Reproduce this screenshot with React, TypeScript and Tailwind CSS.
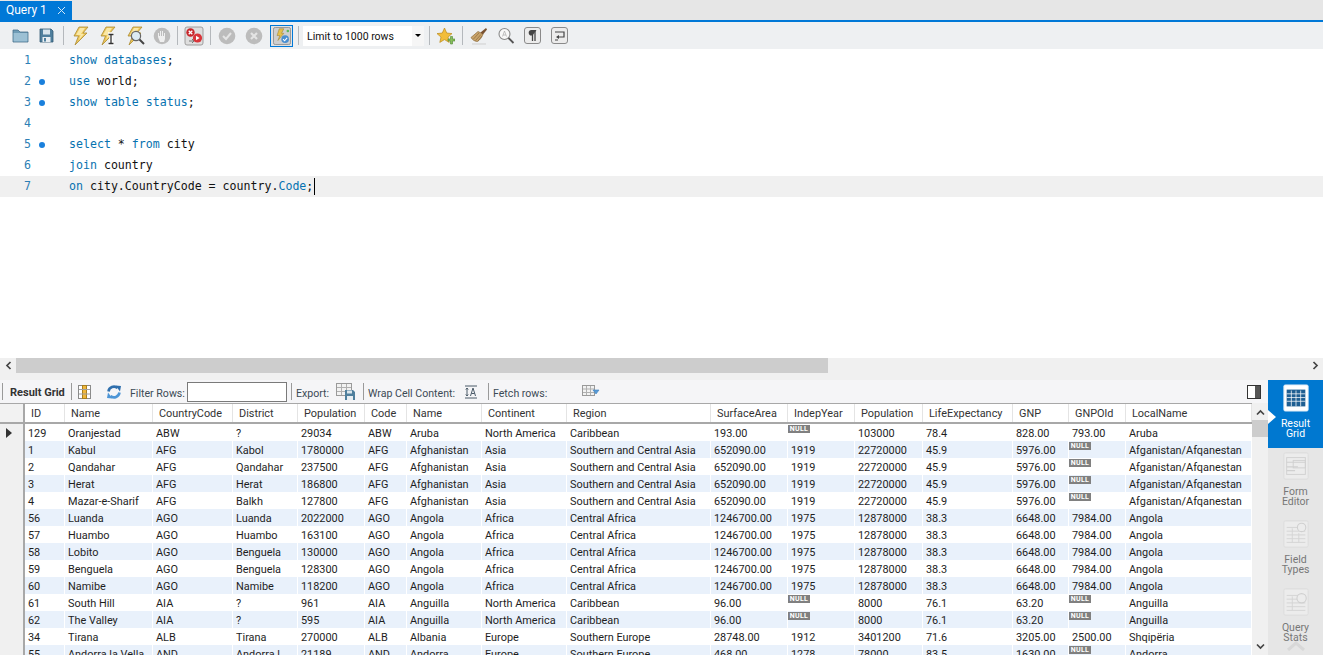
import { ReactNode } from 'react';

const ui = "font-['Roboto',sans-serif]";

const rowGrid =
  'grid grid-cols-[25px_40px_88px_80px_65px_67px_42px_75px_85px_144px_77px_67px_68px_90px_56px_57px_126px]';

type Row = (string | null)[];

const caribbean = ['ABW', 'Aruba', 'North America', 'Caribbean'];
const afg = ['AFG', 'Afghanistan', 'Asia', 'Southern and Central Asia', '652090.00', '1919', '22720000', '45.9', '5976.00', null, 'Afganistan/Afqanestan'];
const ago = ['AGO', 'Angola', 'Africa', 'Central Africa', '1246700.00', '1975', '12878000', '38.3', '6648.00', '7984.00', 'Angola'];
const aia = ['AIA', 'Anguilla', 'North America', 'Caribbean', '96.00', null, '8000', '76.1', '63.20', null, 'Anguilla'];

const rows: Row[] = [
  ['129', 'Oranjestad', 'ABW', '?', '29034', ...caribbean, '193.00', null, '103000', '78.4', '828.00', '793.00', 'Aruba'],
  ['1', 'Kabul', 'AFG', 'Kabol', '1780000', ...afg],
  ['2', 'Qandahar', 'AFG', 'Qandahar', '237500', ...afg],
  ['3', 'Herat', 'AFG', 'Herat', '186800', ...afg],
  ['4', 'Mazar-e-Sharif', 'AFG', 'Balkh', '127800', ...afg],
  ['56', 'Luanda', 'AGO', 'Luanda', '2022000', ...ago],
  ['57', 'Huambo', 'AGO', 'Huambo', '163100', ...ago],
  ['58', 'Lobito', 'AGO', 'Benguela', '130000', ...ago],
  ['59', 'Benguela', 'AGO', 'Benguela', '128300', ...ago],
  ['60', 'Namibe', 'AGO', 'Namibe', '118200', ...ago],
  ['61', 'South Hill', 'AIA', '?', '961', ...aia],
  ['62', 'The Valley', 'AIA', '?', '595', ...aia],
  ['34', 'Tirana', 'ALB', 'Tirana', '270000', 'ALB', 'Albania', 'Europe', 'Southern Europe', '28748.00', '1912', '3401200', '71.6', '3205.00', '2500.00', 'Shqipëria'],
  ['55', 'Andorra la Vella', 'AND', 'Andorra l', '21189', 'AND', 'Andorra', 'Europe', 'Southern Europe', '468.00', '1278', '78000', '83.5', '1630.00', null, 'Andorra'],
];

const headers = ['ID', 'Name', 'CountryCode', 'District', 'Population', 'Code', 'Name', 'Continent', 'Region', 'SurfaceArea', 'IndepYear', 'Population', 'LifeExpectancy', 'GNP', 'GNPOld', 'LocalName'];

function Kw({ children }: { children: ReactNode }) {
  return <span className="text-[#0672b0]">{children}</span>;
}

function EditorLine({ n, dot, active, children }: { n: number; dot?: boolean; active?: boolean; children?: ReactNode }) {
  return (
    <div className={`flex h-[21px] items-center ${active ? 'bg-[#f0f0f0]' : ''}`}>
      <div className="w-[32px] pr-[1px] text-right text-[#2d7fb5]">{n}</div>
      <div className="flex w-[37px] justify-start pl-[7px]">
        {dot && <div className="h-[6px] w-[6px] rounded-full bg-[#1a80dc]" />}
      </div>
      <div className="whitespace-pre text-[#111]">{children}</div>
      {active && <div className="ml-[1px] h-[17px] w-[1px] bg-black" />}
    </div>
  );
}

function Btn({ w = 'w-[27px]', children }: { w?: string; children: ReactNode }) {
  return <div className={`flex h-full shrink-0 items-center justify-center ${w}`}>{children}</div>;
}

function Sep({ w = 'w-[6px]' }: { w?: string }) {
  return (
    <div className={`flex h-full shrink-0 items-center justify-center ${w}`}>
      <div className="h-[19px] w-[1px] bg-[#b4b8bc]" />
    </div>
  );
}

function Bolt({ children }: { children?: ReactNode }) {
  return (
    <svg width="20" height="20" viewBox="0 0 20 20">
      <path d="M8 1h9l-5 6h4L4 19l3.500-9H3z" fill="#edc75a" stroke="#ab8c35" strokeWidth="0.800" />
      <path d="M9 2h5l-4 6h3l-5 6 1.500-5H5z" fill="#f9e8a8" />
      {children}
    </svg>
  );
}

function RoundGray({ glyph }: { glyph: 'check' | 'x' | 'hand' }) {
  return (
    <svg width="18" height="18" viewBox="0 0 18 18">
      <circle cx="9" cy="9" r="8.300" fill="#bcbcbc" />
      {glyph === 'check' && <path d="M5 9l3 3 5-6" fill="none" stroke="#e4e4e4" strokeWidth="2" />}
      {glyph === 'x' && <path d="M6 6l6 6M12 6l-6 6" stroke="#e4e4e4" strokeWidth="2.200" />}
      {glyph === 'hand' && <path d="M5 10V6h1v3h1V4h1v5h1V4h1v5h1V6h1v6l-1 3H7z" fill="#efefef" />}
    </svg>
  );
}

function MainToolbar() {
  return (
    <div className="flex h-[27px] items-center bg-[#eef0f2] pl-[7px]">
      <Btn w="w-[26px]">
        <svg width="17" height="15" viewBox="0 0 17 15">
          <path d="M1 2h5l2 2h8v10H1z" fill="#6f9cb6" stroke="#47708a" strokeWidth="0.800" />
          <rect x="1.600" y="5" width="13.800" height="8.400" fill="#9cc0d4" />
        </svg>
      </Btn>
      <Btn>
        <svg width="15" height="15" viewBox="0 0 15 15">
          <path d="M1 1h11l2 2v11H1z" fill="#4f7f9d" stroke="#345a73" strokeWidth="0.800" />
          <rect x="4" y="1.500" width="7" height="5" fill="#d7e4ec" />
          <rect x="3.500" y="9" width="8" height="5" fill="#e8eef2" />
          <rect x="5" y="10" width="2" height="3.500" fill="#4f7f9d" />
        </svg>
      </Btn>
      <Sep w="w-[7px]" />
      <Btn><Bolt /></Btn>
      <Btn>
        <Bolt>
          <path d="M10 8h6M10 18h6M13 8v10" stroke="#fff" strokeWidth="3.400" />
          <path d="M10.500 8.500h5M10.500 17.500h5M13 8.500v9" stroke="#333" strokeWidth="1.300" />
        </Bolt>
      </Btn>
      <Btn>
        <Bolt>
          <circle cx="11" cy="10" r="4.600" fill="#dcebf2" stroke="#666" strokeWidth="1.200" />
          <path d="M14.500 13.500l4.500 4.500" stroke="#444" strokeWidth="2" />
        </Bolt>
      </Btn>
      <Btn><RoundGray glyph="hand" /></Btn>
      <Sep w="w-[5px]" />
      <Btn>
        <svg width="20" height="20" viewBox="0 0 20 20">
          <rect x="1" y="1" width="18" height="18" rx="2" fill="#dedede" stroke="#8c8c8c" strokeWidth="0.800" />
          <path d="M5 15h5M8 13l2 2-2 2" stroke="#777" strokeWidth="1" fill="none" />
          <circle cx="6.500" cy="6.500" r="4.200" fill="#c8262c" />
          <path d="M4.700 4.700l3.600 3.600M8.300 4.700l-3.600 3.600" stroke="#fff" strokeWidth="1.300" />
          <circle cx="13.500" cy="12" r="4.600" fill="#d8343a" />
          <path d="M12 9.800v4.400l3.600-2.200z" fill="#fff" />
        </svg>
      </Btn>
      <Sep />
      <Btn><RoundGray glyph="check" /></Btn>
      <Btn><RoundGray glyph="x" /></Btn>
      <Btn w="w-[29px]">
        <div className="flex h-[22px] w-[23px] items-center justify-center border border-[#0078d7] bg-[#e2e2e2]">
          <svg width="18" height="18" viewBox="0 0 20 20">
            <rect x="0.500" y="0.500" width="19" height="19" rx="2" fill="#cfcfcf" stroke="#8e8e8e" />
            <path d="M7 2h5L9.500 7H12L5.500 15 7.500 9.500H4.500z" fill="#e5c04c" stroke="#9c8030" strokeWidth="0.600" />
            <circle cx="13.500" cy="13.500" r="4.200" fill="#4a8ed0" />
            <path d="M11.200 13.500l1.700 1.800 2.800-3.200" stroke="#fff" strokeWidth="1.200" fill="none" />
            <circle cx="16.500" cy="4.500" r="1.400" fill="#5cb85c" />
          </svg>
        </div>
      </Btn>
      <Sep w="w-[4px]" />
      <div className={`ml-[3px] flex h-[20px] w-[121px] shrink-0 items-center bg-white pl-[4px] text-[10.500px] text-[#111] ${ui}`}>
        <span className="flex-1 pt-[2px]">Limit to 1000 rows</span>
        <div className="flex h-full w-[12px] items-center justify-center bg-[#f6f6f6]">
          <div className="h-0 w-0 border-x-[3px] border-t-[3px] border-x-transparent border-t-black" />
        </div>
      </div>
      <div className="w-[2px] shrink-0" />
      <Sep />
      <Btn>
        <svg width="19" height="18" viewBox="0 0 19 18">
          <path d="M8.500 1l2.200 5 5.300.600-4 3.500 1.200 5.300-4.700-2.800-4.700 2.800 1.200-5.300-4-3.500 5.300-.600z" fill="#f2bd3a" stroke="#b98a1c" strokeWidth="0.700" />
          <path d="M12 12h2.500V9.500h2V12H19v2h-2.500v3h-2v-3H12z" fill="#86bf5a" stroke="#4f8530" strokeWidth="0.600" />
        </svg>
      </Btn>
      <Sep />
      <Btn>
        <svg width="18" height="18" viewBox="0 0 18 18">
          <path d="M1 10.500l7-6 5 2.500c-1 3-3 6-5.500 7.500C5 14.500 2.500 13 1 10.500z" fill="#c9a36a" stroke="#8c6b3c" strokeWidth="0.700" />
          <path d="M3.500 12l5.500-6M5.500 13.500l5.500-6M8 14l4-5" stroke="#8c6b3c" strokeWidth="0.700" />
          <path d="M10.500 5.500L16 1l1 1.500-4 5z" fill="#7a5230" />
          <path d="M2 17h14" stroke="#cfcfcf" strokeWidth="1" />
        </svg>
      </Btn>
      <Btn>
        <svg width="18" height="18" viewBox="0 0 18 18">
          <circle cx="7.500" cy="7" r="5.500" fill="#f8f8f8" stroke="#8a8a8a" strokeWidth="1.100" />
          <path d="M5.500 9.500L7.500 4l2 5.500M6.200 8h2.600" stroke="#a8a8a8" strokeWidth="0.700" fill="none" />
          <path d="M11.500 11l5 5" stroke="#555" strokeWidth="1.800" />
        </svg>
      </Btn>
      <Btn>
        <svg width="17" height="17" viewBox="0 0 17 17">
          <rect x="0.500" y="0.500" width="16" height="16" rx="2.500" fill="#ececec" stroke="#8a8a8a" />
          <path d="M11 3v11M8.500 3v11" stroke="#444" strokeWidth="1.300" />
          <path d="M12.500 3H7.500a2.800 2.800 0 0 0 0 5.600h1z" fill="#444" />
        </svg>
      </Btn>
      <Btn>
        <svg width="17" height="17" viewBox="0 0 17 17">
          <rect x="0.500" y="0.500" width="16" height="16" rx="2.500" fill="#ececec" stroke="#8a8a8a" />
          <path d="M4 5h9v5H7M4 13h3" stroke="#444" strokeWidth="1.200" fill="none" />
          <path d="M8 8v4l-3-2z" fill="#444" />
        </svg>
      </Btn>
    </div>
  );
}

function Label({ children }: { children: ReactNode }) {
  return <span className="shrink-0 whitespace-nowrap text-[10.600px] text-[#3c4a55]">{children}</span>;
}

function ThinSep({ cls }: { cls: string }) {
  return <div className={`h-[17px] w-[1px] shrink-0 bg-[#9a9a9a] ${cls}`} />;
}

function ResultToolbar() {
  return (
    <div className={`flex h-[23px] items-center bg-[#f5f5f7] pl-[2px] ${ui}`}>
      <ThinSep cls="" />
      <span className="ml-[7px] mt-[3px] w-[55px] shrink-0 whitespace-nowrap text-[11px] font-bold text-[#333]">Result Grid</span>
      <ThinSep cls="ml-[6px]" />
      <svg className="ml-[6px] shrink-0" width="13" height="14" viewBox="0 0 13 14">
        <rect x="0.500" y="0.500" width="12" height="13" fill="#fff" stroke="#8b8b8b" />
        <rect x="4.500" y="0.500" width="4" height="13" fill="#f0b73a" stroke="#a87f20" />
        <path d="M1 4.500h11M1 9h11" stroke="#a0a0a0" />
      </svg>
      <svg className="ml-[15px] shrink-0" width="16" height="14" viewBox="0 0 16 14">
        <path d="M2.500 6.500A5.500 5.500 0 0 1 11.500 3" fill="none" stroke="#2f6fad" strokeWidth="2.600" />
        <path d="M9.500 0.500L15 1l-1 5.500z" fill="#2f6fad" />
        <path d="M13.500 7.500A5.500 5.500 0 0 1 4.500 11" fill="none" stroke="#4d95d6" strokeWidth="2.600" />
        <path d="M6.500 13.500L1 13l1-5.500z" fill="#4d95d6" />
      </svg>
      <span className="ml-[8px] w-[57px] shrink-0"><Label>Filter Rows:</Label></span>
      <div className="h-[20px] w-[100px] shrink-0 border border-[#7a7a7a] bg-white" />
      <ThinSep cls="ml-[4px]" />
      <span className="ml-[4px] w-[40px] shrink-0"><Label>Export:</Label></span>
      <svg className="shrink-0" width="20" height="18" viewBox="0 0 20 18">
        <rect x="0.500" y="0.500" width="15" height="12" fill="#f2f2f2" stroke="#9a9a9a" />
        <path d="M1 4.500h14M1 8.500h14M5.500 1v11M10.500 1v11" stroke="#b0b0b0" />
        <path d="M9 7h8l2 2v8H9z" fill="#4f7f9d" />
        <rect x="11" y="7.500" width="5" height="3" fill="#dbe6ec" />
        <rect x="11" y="13" width="6" height="4" fill="#e8eef2" />
      </svg>
      <ThinSep cls="ml-[7px]" />
      <span className="ml-[4px] w-[97px] shrink-0"><Label>Wrap Cell Content:</Label></span>
      <svg className="shrink-0" width="12" height="14" viewBox="0 0 12 14">
        <path d="M0 1h12M0 13h12" stroke="#4a5a68" />
        <path d="M2 3v8M.8 4.500L2 3l1.200 1.500M.8 9.500L2 11l1.200-1.500" stroke="#4a5a68" fill="none" />
        <path d="M5.500 11l2.500-8 2.500 8M6.500 8.500h3" stroke="#4a5a68" fill="none" />
      </svg>
      <ThinSep cls="ml-[11px]" />
      <span className="ml-[4px] w-[89px] shrink-0"><Label>Fetch rows:</Label></span>
      <svg className="shrink-0" width="18" height="13" viewBox="0 0 18 13">
        <rect x="0.500" y="0.500" width="12" height="10" fill="#f2f2f2" stroke="#9a9a9a" />
        <path d="M1 4h11M1 7.500h11M4.500 1v9M8.500 1v9" stroke="#b0b0b0" />
        <path d="M11 5h6l-3 4z" fill="#5a9bd6" stroke="#3b7fc0" strokeWidth="0.600" />
      </svg>
      <div className="flex-1" />
      <div className="mr-[7px] flex h-[14px] w-[14px] shrink-0 border border-[#333] bg-white">
        <div className="ml-auto h-full w-[5px] bg-[#555]" />
      </div>
    </div>
  );
}

function Cell({ value, blue }: { value: string | null; blue: boolean }) {
  return (
    <div className={`h-[17px] overflow-hidden whitespace-nowrap border-r border-white pl-[3px] pt-[1px] leading-[17px] ${blue ? 'bg-[#e9f1fb]' : 'bg-white'}`}>
      {value === null ? (
        <div className="ml-[-3px] h-[8px] w-[22px] bg-[#808080] text-center text-[7px] font-bold leading-[8px] tracking-[0.300px] text-white">NULL</div>
      ) : (
        value
      )}
    </div>
  );
}

function Grid() {
  return (
    <div className={`flex-1 overflow-hidden border-t border-[#a8a8a8] text-[10.900px] text-[#1e1e1e] ${ui}`}>
      <div className={`${rowGrid} h-[20px] items-stretch border-b-2 border-[#a8a8a8] bg-white`}>
        <div className="border-r-2 border-[#a8a8a8] bg-[#f2f2f2]" />
        {headers.map((h, i) => (
          <div key={i} className="flex items-center overflow-hidden whitespace-nowrap border-r border-[#e4e4e4] pl-[6px] pt-[2px] text-[#333]">
            {h}
          </div>
        ))}
      </div>
      {rows.map((r, i) => (
        <div key={i} className={`${rowGrid} h-[17px]`}>
          <div className="flex items-center border-r-2 border-[#a8a8a8] bg-[#f0f0f0] pl-[6px]">
            {i === 0 && <div className="h-0 w-0 border-y-[5px] border-l-[6px] border-y-transparent border-l-[#333]" />}
          </div>
          {r.map((v, j) => (
            <Cell key={j} value={v} blue={i % 2 === 1} />
          ))}
        </div>
      ))}
    </div>
  );
}

function SideItem({ label, active, children }: { label: string[]; active?: boolean; children: ReactNode }) {
  return (
    <div className={`relative flex h-[68px] flex-col items-center pt-[4px] text-[10.500px] leading-[10px] ${active ? 'bg-[#0078d0] text-white' : 'text-[#777]'}`}>
      {active && <div className="absolute left-0 top-[30px] h-0 w-0 border-y-[7px] border-l-[8px] border-y-transparent border-l-white" />}
      {children}
      <div className="mt-[7px] text-center">
        {label.map((l) => (
          <div key={l}>{l}</div>
        ))}
      </div>
    </div>
  );
}

function SideSheet({ active, children }: { active?: boolean; children?: ReactNode }) {
  return (
    <svg width="28" height="28" viewBox="0 0 28 30">
      <rect x="1" y="1" width="26" height="28" rx="1.500" fill={active ? '#fff' : '#ececec'} stroke={active ? '#d8e8f5' : '#dcdcdc'} />
      {children}
    </svg>
  );
}

function Sidebar() {
  return (
    <div className={`relative w-[55px] shrink-0 bg-[#e6e6e6] ${ui}`}>
      <SideItem label={['Result', 'Grid']} active>
        <SideSheet active>
          <rect x="4" y="6" width="20" height="18" fill="#1f5f92" />
          <path d="M4 10.500h20M4 14.500h20M4 18.500h20M9 7v17M14 7v17M19 7v17" stroke="#fff" strokeWidth="0.800" />
        </SideSheet>
      </SideItem>
      <SideItem label={['Form', 'Editor']}>
        <SideSheet>
          <rect x="4" y="6" width="20" height="18" fill="none" stroke="#d0d0d0" />
          <path d="M4 11h20M4 16h12M4 20h9" stroke="#d0d0d0" strokeWidth="1.200" />
          <rect x="11" y="9" width="13" height="8" fill="none" stroke="#d0d0d0" />
        </SideSheet>
      </SideItem>
      <SideItem label={['Field', 'Types']}>
        <SideSheet>
          <path d="M4 8h12M4 12h20M4 16h20M4 20h20M4 24h20M10 9v15M17 14v10" stroke="#d4d4d4" />
          <circle cx="20" cy="8" r="4.500" fill="#ececec" stroke="#d0d0d0" strokeWidth="1.200" />
        </SideSheet>
      </SideItem>
      <SideItem label={['Query', 'Stats']}>
        <SideSheet>
          <path d="M4 8h12M4 12h12M4 16h20M4 20h20M4 24h20M10 9v15" stroke="#d4d4d4" />
          <circle cx="20" cy="11" r="5" fill="#ececec" stroke="#d0d0d0" strokeWidth="1.200" />
        </SideSheet>
      </SideItem>
      <svg className="absolute bottom-[4px] left-[18px]" width="20" height="10" viewBox="0 0 20 10">
        <path d="M2 9l8-7 8 7" fill="none" stroke="#d8d8d8" strokeWidth="3" />
      </svg>
    </div>
  );
}

export default function App() {
  return (
    <div className="flex h-[655px] w-[1323px] flex-col overflow-hidden bg-white">
      <div className="flex h-[20px] shrink-0 bg-[#e6e6e6] pt-[1px]">
        <div className={`flex w-[72px] items-center bg-[#0078d7] pb-[2px] pl-[6px] text-[12px] text-white ${ui}`}>
          <span className="w-[51px]">Query 1</span>
          <svg className="mt-[2px]" width="9" height="9" viewBox="0 0 9 9">
            <path d="M1 1l7 7M8 1l-7 7" stroke="#cfe6f7" strokeWidth="1" />
          </svg>
        </div>
      </div>
      <div className="h-[2px] shrink-0 bg-[#0078d7]" />
      <MainToolbar />

      <div className="flex h-[309px] shrink-0 flex-col pt-[1px] font-['DejaVu_Sans_Mono',monospace] text-[11.600px]">
        <EditorLine n={1}><Kw>show databases</Kw>;</EditorLine>
        <EditorLine n={2} dot><Kw>use</Kw> world;</EditorLine>
        <EditorLine n={3} dot><Kw>show table status</Kw>;</EditorLine>
        <EditorLine n={4} />
        <EditorLine n={5} dot><Kw>select</Kw> * <Kw>from</Kw> city</EditorLine>
        <EditorLine n={6}><Kw>join</Kw> country</EditorLine>
        <EditorLine n={7} active><Kw>on</Kw> city.CountryCode = country.<Kw>Code</Kw>;</EditorLine>
      </div>

      <div className="flex h-[22px] shrink-0 items-start bg-[#f0f0f0]">
        <div className="flex h-[15px] w-[16px] shrink-0 items-center justify-center">
          <svg width="7" height="9" viewBox="0 0 7 9"><path d="M5.500 1L2 4.500 5.500 8" fill="none" stroke="#444" strokeWidth="1.700" /></svg>
        </div>
        <div className="h-[15px] w-[812px] shrink-0 bg-[#cdcdcd]" />
        <div className="flex-1" />
        <div className="flex h-[15px] w-[16px] shrink-0 items-center justify-center">
          <svg width="7" height="9" viewBox="0 0 7 9"><path d="M1.500 1L5 4.500 1.500 8" fill="none" stroke="#444" strokeWidth="1.700" /></svg>
        </div>
      </div>

      <div className="flex min-h-0 flex-1">
        <div className="flex w-[1268px] shrink-0 flex-col">
          <ResultToolbar />
          <div className="flex min-h-0 flex-1">
            <div className="flex w-[1252px] shrink-0 flex-col">
              <Grid />
            </div>
            <div className="flex w-[16px] shrink-0 flex-col items-center bg-[#f0f0f0]">
              <svg className="mt-[6px]" width="9" height="7" viewBox="0 0 9 7"><path d="M1 5.500L4.500 2 8 5.500" fill="none" stroke="#444" strokeWidth="1.700" /></svg>
              <div className="mt-[4px] h-[17px] w-full bg-[#cdcdcd]" />
              <div className="flex-1" />
              <svg className="mb-[5px]" width="9" height="7" viewBox="0 0 9 7"><path d="M1 1.500L4.500 5 8 1.500" fill="none" stroke="#444" strokeWidth="1.700" /></svg>
            </div>
          </div>
        </div>
        <Sidebar />
      </div>
    </div>
  );
}
